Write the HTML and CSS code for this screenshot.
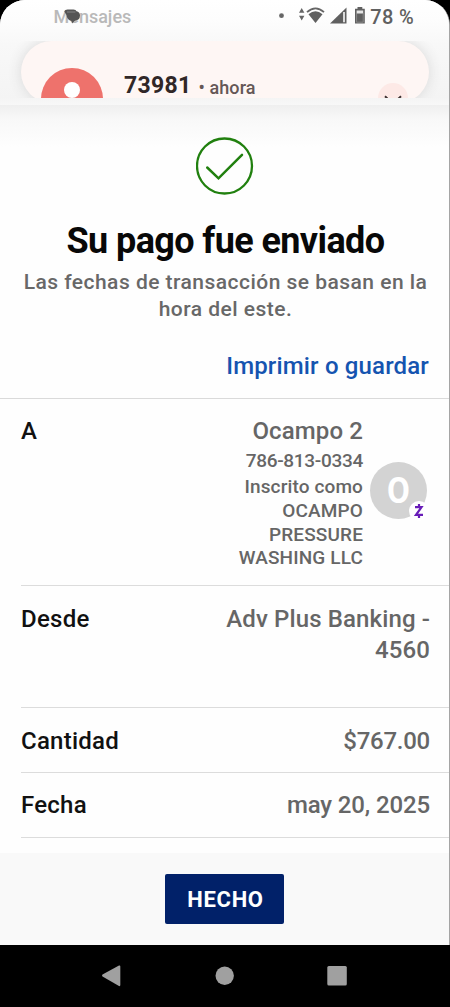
FILE: index.html
```
<!DOCTYPE html>
<html lang="es">
<head>
<meta charset="utf-8">
<title>Su pago fue enviado</title>
<link rel="stylesheet" href="styles.css">
</head>
<body>
<div class="phone">
  <div class="screen">
    <header class="top">
      <div class="status">
        <div class="status-app"><span class="app-name">Mensajes</span>
          <svg class="bubble" width="18" height="16" viewBox="0 0 18 16"><path d="M3.500 0.500H9.500Q12 0.500 12.500 2.200Q16 3 16 6.500Q16 11 10.500 12L8 14.500L7.500 12Q3 11 2.500 6L0.300 2.500Q1 0.500 3.500 0.500Z" fill="#555"/><path d="M3 3H11.500" fill="none" stroke="#858585" stroke-width="1"/></svg>
        </div>
        <div class="status-icons">
          <svg width="86" height="24" viewBox="278 4 86 24">
            <circle cx="280.500" cy="15.700" r="2.400" fill="#666"/>
            <path d="M298 12.800L300.700 8L303.400 12.800ZM298 15.800H303.400L300.700 20.500Z" fill="#666"/>
            <path d="M306 12.200Q314.500 4.500 323 12.200" fill="none" stroke="#666" stroke-width="1.800"/>
            <path d="M307.500 14.200Q314.500 8.300 321.500 14.200L314.500 22.900Z" fill="#606060"/>
            <path d="M329 23.500L345.500 7.500V23.500Z" fill="#606060"/>
            <path d="M343 12V22.300" stroke="#e9e9e9" stroke-width="1.800"/>
            <path d="M356.500 7H361.300V8.700H363.800V23.500H354V8.700H356.500Z" fill="#606060"/>
            <path d="M355.600 10.400H362.200V13.600H355.600Z" fill="#e6e6e6"/><path d="M355.600 13V22.200H362.200V13" fill="none" stroke="#999" stroke-width=".7"/>
          </svg>
          <span class="battery">78 %</span>
        </div>
      </div>
      <div class="notice-clip">
        <div class="notice">
          <svg class="sender" width="62" height="62" viewBox="0 0 62 62"><circle cx="31" cy="31" r="31" fill="#ee726c"/><circle cx="31" cy="22" r="8" fill="#fff"/></svg>
          <span class="number">73981</span><span class="when">• ahora</span>
          <svg class="expand" width="30" height="30" viewBox="0 0 30 30"><circle cx="15" cy="15" r="15" fill="#fde9e6"/><path d="M7 13.200L15 21L23 13.200" fill="none" stroke="#3d3232" stroke-width="2"/></svg>
        </div>
      </div>
    </header>
    <main class="receipt">
      <section class="summary">
        <svg class="check" width="58" height="58" viewBox="0 0 58 58" fill="none" stroke="#21800f"><circle cx="28.500" cy="29" r="27.500" stroke-width="2.300"/><path d="M11.200 30.500L22.500 41.300L46 17.800" stroke-width="2.500" stroke-linecap="round"/></svg>
        <h1>Su pago fue enviado</h1>
        <p>Las fechas de transacción se basan en la<br>hora del este.</p>
        <a class="print">Imprimir o guardar</a>
      </section>
      <section class="row row-to">
        <span class="label">A</span>
        <div class="payee">
          <div class="payee-text">
            <div class="name">Ocampo 2</div>
            <div class="tel">786-813-0334</div>
            <div class="detail">Inscrito como<br>OCAMPO<br>PRESSURE<br>WASHING LLC</div>
          </div>
          <div class="avatar"><span class="initial">O</span>
            <svg class="zelle" width="20" height="22" viewBox="0 0 20 22"><circle cx="10" cy="11" r="10" fill="#fff"/><path d="M6 7.200H12.500L7 14.800H14M10 4V7M10 15V18" fill="none" stroke="#681cb8" stroke-width="2.200"/></svg>
          </div>
        </div>
      </section>
      <section class="row row-from"><span class="label desde">Desde</span><span class="value from">Adv Plus Banking -<br>4560</span></section>
      <section class="row row-amount"><span class="label cantidad">Cantidad</span><span class="value amount">$767.00</span></section>
      <section class="row row-date"><span class="label fecha">Fecha</span><span class="value date">may 20, 2025</span></section>
    </main>
    <footer class="actions"><button>HECHO</button></footer>
  </div>
  <nav class="navbar">
    <svg width="450" height="62" viewBox="0 0 450 62" fill="#a0a0a0"><path d="M102.500 29.500Q101.500 30.500 102.500 31.500L119 41Q120.300 41.500 120.300 40V21.500Q120.300 20 119 20.500Z"/><circle cx="224.700" cy="30.700" r="9.200"/><rect x="327.300" y="21" width="19.500" height="19.500" rx="1.500"/></svg>
  </nav>
</div>
</body>
</html>
```
FILE: styles.css
```
* { box-sizing: border-box; }
body { margin: 0; background: #000; font-family: Roboto, "Liberation Sans", sans-serif; }
.phone { width: 450px; height: 1007px; background: #000; overflow: hidden; }
.screen { height: 945px; background: #fefefe; border-radius: 25px 25px 0 0; border-right: 1px solid #a5a5a5; overflow: hidden; display: flex; flex-direction: column; }
.top { height: 105px; flex: none; background: linear-gradient(#fff 0, #fdfdfd 20px, #f8f8f8 45px, #f4f4f4 98px, #f8f8f8 105px); }
.status { height: 41px; display: flex; justify-content: space-between; padding: 4px 35px 0 53.500px; }
.status-app { position: relative; height: 24px; line-height: 25px; font-size: 18px; font-weight: 500; color: #b9b9b9; }
.bubble { position: absolute; left: 10px; top: 5px; }
.status-icons { display: flex; gap: 5.500px; height: 24px; }
.battery { font-size: 20px; line-height: 26px; font-weight: 500; color: #606060; letter-spacing: .3px; white-space: nowrap; }
.notice-clip { height: 57px; overflow: hidden; padding: 0 20px 0 21px; }
.notice { height: 62px; border-radius: 31px; background: #fef6f4; box-shadow: 0 0 14px #d8d8d8; display: flex; padding-left: 20px; padding-right: 21px; }
.sender { margin-top: 27px; flex: none; }
.number { margin: 31px 0 0 21px; font-size: 23px; line-height: 28px; font-weight: 700; color: #302727; letter-spacing: .3px; }
.when { margin: 35px 0 0 7px; font-size: 18px; line-height: 24px; font-weight: 500; color: #655756; letter-spacing: .1px; }
.expand { margin: 42px 0 0 auto; flex: none; }
.receipt { height: 748px; flex: none; background: linear-gradient(#efefef 0, #f8f8f8 14px, #fefefe 42px); }
.summary { height: 293.500px; border-bottom: 1.500px solid #dadada; display: flex; flex-direction: column; align-items: center; padding-top: 32px; }
.check { flex: none; }
h1 { margin: 24.500px 0 0; padding-left: 2px; font-size: 36px; line-height: 42px; font-weight: 700; color: #080808; white-space: nowrap; letter-spacing: -.6px; }
p { margin: 7px 0 0; padding-left: 2px; text-align: center; font-size: 21px; line-height: 27.500px; color: #686868; letter-spacing: .47px; font-weight: 500; white-space: nowrap; }
.print { align-self: flex-end; margin: 27.500px 20px 0 0; font-size: 24px; line-height: 30px; font-weight: 500; color: #1554b0; letter-spacing: .16px; }
.row { margin-left: 21px; padding: 17.500px 19px 0 0; border-bottom: 1.500px solid #dcdcdc; display: flex; justify-content: space-between; font-size: 24px; line-height: 31px; font-weight: 500; white-space: nowrap; }
.row-to { height: 187.500px; }
.row-from { height: 122px; }
.row-amount { height: 64.500px; }
.row-date { height: 65px; }
.label { color: #111; }
.desde, .cantidad, .fecha { letter-spacing: .25px; }
.value { color: #666; text-align: right; }
.from { letter-spacing: .12px; }
.amount { letter-spacing: -.25px; }
.date { letter-spacing: -.12px; }
.payee { display: flex; gap: 7px; color: #666; text-align: right; }
.name { letter-spacing: .12px; }
.tel { margin-top: 2px; font-size: 19px; line-height: 24px; letter-spacing: -.3px; }
.detail { margin-top: 2px; font-size: 19px; line-height: 23.800px; letter-spacing: .13px; }
.avatar { position: relative; margin: 46px 3px 0 0; width: 57px; height: 57px; border-radius: 50%; background: #d3d3d3; color: #fff; font-size: 36px; line-height: 59px; font-weight: 700; text-align: center; }
.initial { display: inline-block; transform: scaleX(.92); }
.zelle { position: absolute; left: 39px; top: 38px; }
.actions { flex: 1; background: #f9f9f9; display: flex; justify-content: center; align-items: flex-start; padding-top: 21px; }
button { width: 118.500px; height: 50px; border: 0; border-radius: 2px; background: #012169; color: #fff; font: 700 22px/52px Roboto, sans-serif; letter-spacing: .7px; padding: 0 0 0 2px; }
.navbar { height: 62px; }
.navbar svg { display: block; }
```
